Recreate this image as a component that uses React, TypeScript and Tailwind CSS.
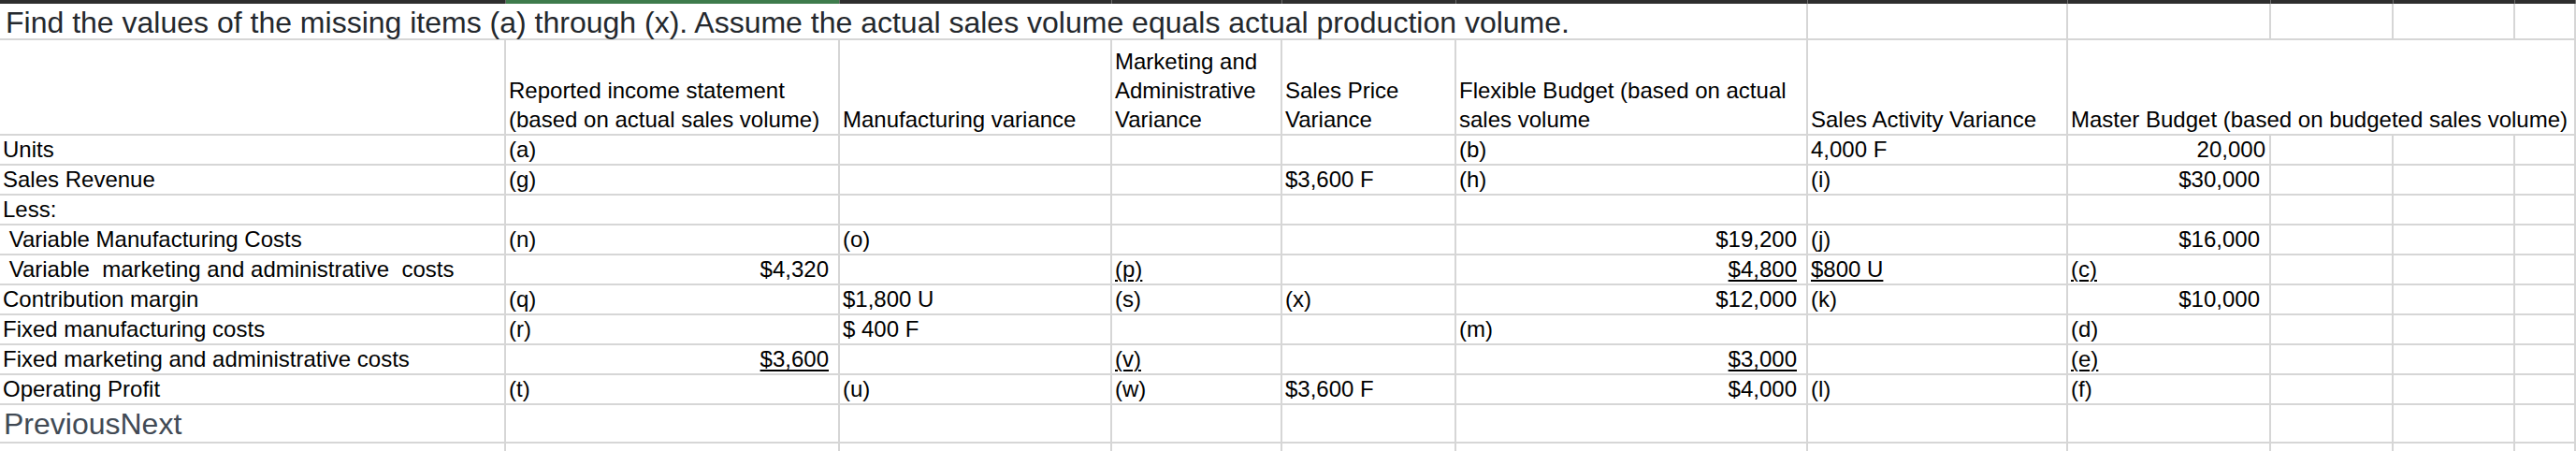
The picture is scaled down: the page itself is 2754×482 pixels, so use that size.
import React from 'react';

type C = { t: string; r?: boolean; u?: boolean; n?: boolean } | null;

const GRID =
  'grid grid-cols-[541px_357px_291px_182px_186px_376px_278px_217px_131px_130px_1fr]';

const rows: { label: string; cells: C[] }[] = [
  {
    label: 'Units',
    cells: [{ t: '(a)' }, null, null, null, { t: '(b)' }, { t: '4,000 F' }, { t: '20,000', r: true, n: true }],
  },
  {
    label: 'Sales Revenue',
    cells: [{ t: '(g)' }, null, null, { t: '$3,600 F' }, { t: '(h)' }, { t: '(i)' }, { t: '$30,000', r: true }],
  },
  { label: 'Less:', cells: [null, null, null, null, null, null, null] },
  {
    label: ' Variable Manufacturing Costs',
    cells: [{ t: '(n)' }, { t: '(o)' }, null, null, { t: '$19,200', r: true }, { t: '(j)' }, { t: '$16,000', r: true }],
  },
  {
    label: ' Variable  marketing and administrative  costs',
    cells: [
      { t: '$4,320', r: true },
      null,
      { t: '(p)', u: true },
      null,
      { t: '$4,800', r: true, u: true },
      { t: '$800 U', u: true },
      { t: '(c)', u: true },
    ],
  },
  {
    label: 'Contribution margin',
    cells: [{ t: '(q)' }, { t: '$1,800 U' }, { t: '(s)' }, { t: '(x)' }, { t: '$12,000', r: true }, { t: '(k)' }, { t: '$10,000', r: true }],
  },
  {
    label: 'Fixed manufacturing costs',
    cells: [{ t: '(r)' }, { t: '$ 400 F' }, null, null, { t: '(m)' }, null, { t: '(d)' }],
  },
  {
    label: 'Fixed marketing and administrative costs',
    cells: [
      { t: '$3,600', r: true, u: true },
      null,
      { t: '(v)', u: true },
      null,
      { t: '$3,000', r: true, u: true },
      null,
      { t: '(e)', u: true },
    ],
  },
  {
    label: 'Operating Profit',
    cells: [{ t: '(t)' }, { t: '(u)' }, { t: '(w)' }, { t: '$3,600 F' }, { t: '$4,000', r: true }, { t: '(l)' }, { t: '(f)' }],
  },
];

function DataCell({ c }: { c: C }) {
  const align = c && c.r ? (c.n ? 'text-right pr-[4px]' : 'text-right pr-[10px]') : 'text-left pl-[3px]';
  return (
    <div className={`h-[32px] border-r-2 border-b-2 border-[#d6d6d6] leading-[30px] whitespace-pre ${align}`}>
      {c ? (
        <span className={c.u ? 'underline decoration-2 underline-offset-[3px]' : ''}>{c.t}</span>
      ) : null}
    </div>
  );
}

function HeadCell({ lines, span }: { lines: string[]; span?: boolean }) {
  return (
    <div
      className={`h-[102px] border-r-2 border-b-2 border-[#d6d6d6] flex flex-col justify-end pl-[3px] leading-[31px] whitespace-nowrap ${
        span ? 'col-span-4' : ''
      }`}
    >
      {lines.map((l, i) => (
        <div key={i}>{l}</div>
      ))}
    </div>
  );
}

export default function App() {
  const topCols = Array.from({ length: 11 });
  return (
    <div className="w-[2754px] h-[482px] overflow-hidden bg-white font-['Liberation_Sans',Arial,sans-serif] text-[24px] text-black">
      {/* column header strip */}
      <div className={GRID}>
        {topCols.map((_, i) => (
          <div
            key={i}
            className={`h-[4px] border-r border-[#6b6b6b] ${i === 1 ? 'bg-[#3e7b4c]' : 'bg-[#2e2e2e]'}`}
          />
        ))}
      </div>

      {/* title row */}
      <div className={GRID}>
        <div className="col-span-6 h-[39px] border-r-2 border-b-2 border-[#d6d6d6] pl-[6px] pt-[2px] text-[32px] leading-[37px] whitespace-nowrap text-[#24282d]">
          Find the values of the missing items (a) through (x). Assume the actual sales volume equals actual production volume.
        </div>
        {[0, 1, 2, 3, 4].map((i) => (
          <div key={i} className="h-[39px] border-r-2 border-b-2 border-[#d6d6d6]" />
        ))}
      </div>

      {/* header row */}
      <div className={GRID}>
        <HeadCell lines={[]} />
        <HeadCell lines={['Reported income statement', '(based on actual sales volume)']} />
        <HeadCell lines={['Manufacturing variance']} />
        <HeadCell lines={['Marketing and', 'Administrative', 'Variance']} />
        <HeadCell lines={['Sales Price', 'Variance']} />
        <HeadCell lines={['Flexible Budget (based on actual', 'sales volume']} />
        <HeadCell lines={['Sales Activity Variance']} />
        <HeadCell lines={['Master Budget (based on budgeted sales volume)']} span />
      </div>

      {/* data rows */}
      {rows.map((row, ri) => (
        <div key={ri} className={GRID}>
          <DataCell c={{ t: row.label }} />
          {row.cells.map((c, ci) => (
            <DataCell key={ci} c={c} />
          ))}
          <DataCell c={null} />
          <DataCell c={null} />
          <DataCell c={null} />
        </div>
      ))}

      {/* PreviousNext row */}
      <div className={GRID}>
        <div className="h-[41px] border-r-2 border-b-2 border-[#d6d6d6] pl-[4px] pt-[4px] text-[32px] leading-[32px] text-[#414a55] whitespace-nowrap">
          PreviousNext
        </div>
        {Array.from({ length: 10 }).map((_, i) => (
          <div key={i} className="h-[41px] border-r-2 border-b-2 border-[#d6d6d6]" />
        ))}
      </div>

      {/* trailing partial row */}
      <div className={GRID}>
        {Array.from({ length: 11 }).map((_, i) => (
          <div key={i} className="h-[32px] border-r-2 border-b-2 border-[#d6d6d6]" />
        ))}
      </div>
    </div>
  );
}
